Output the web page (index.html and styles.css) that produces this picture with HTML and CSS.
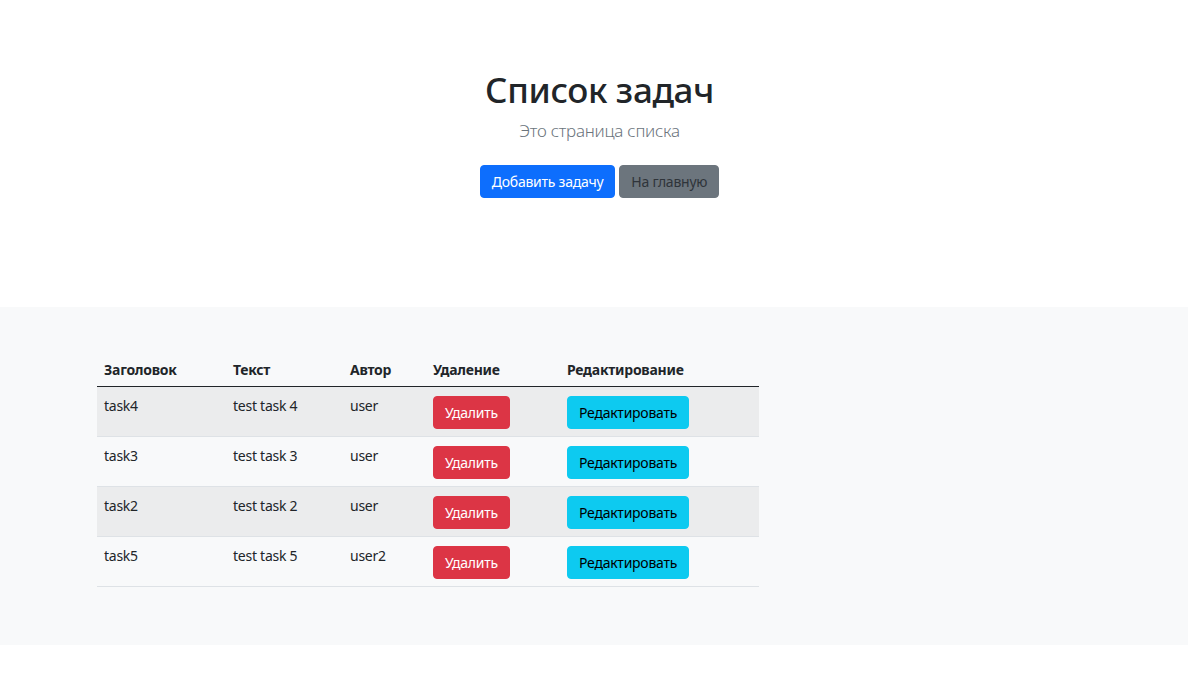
FILE: index.html
```html
<!DOCTYPE html>
<html lang="ru">
<head>
<meta charset="utf-8">
<title>Список задач</title>
<link rel="stylesheet" href="styles.css">
</head>
<body>
<section class="hero">
  <h1 class="hero-title">Список задач</h1>
  <p class="lead">Это страница списка</p>
  <div class="hero-actions">
    <a class="btn btn-primary">Добавить задачу</a>
    <a class="btn btn-secondary">На главную</a>
  </div>
</section>
<div class="album">
  <table class="table">
    <thead>
      <tr>
        <th class="c1">Заголовок</th>
        <th class="c2">Текст</th>
        <th class="c3">Автор</th>
        <th class="c4">Удаление</th>
        <th class="c5">Редактирование</th>
      </tr>
    </thead>
    <tbody>
      <tr class="odd">
        <td>task4</td><td>test task 4</td><td>user</td>
        <td class="act"><a class="btn btn-danger">Удалить</a></td>
        <td class="act"><a class="btn btn-info">Редактировать</a></td>
      </tr>
      <tr>
        <td>task3</td><td>test task 3</td><td>user</td>
        <td class="act"><a class="btn btn-danger">Удалить</a></td>
        <td class="act"><a class="btn btn-info">Редактировать</a></td>
      </tr>
      <tr class="odd">
        <td>task2</td><td>test task 2</td><td>user</td>
        <td class="act"><a class="btn btn-danger">Удалить</a></td>
        <td class="act"><a class="btn btn-info">Редактировать</a></td>
      </tr>
      <tr>
        <td>task5</td><td>test task 5</td><td>user2</td>
        <td class="act"><a class="btn btn-danger">Удалить</a></td>
        <td class="act"><a class="btn btn-info">Редактировать</a></td>
      </tr>
    </tbody>
  </table>
</div>
</body>
</html>
```
FILE: styles.css
```css
* { box-sizing: border-box; }
html, body { margin: 0; padding: 0; background: #fff; }
body {
  font-family: "Noto Sans", "Open Sans", sans-serif;
  font-size: 14px;
  line-height: 21px;
  letter-spacing: -0.25px;
  color: #212529;
}
.hero {
  text-align: center;
  padding: 69px 0 102px 11px;
}
.hero-title {
  margin: 0 0 7px;
  font-size: 35px;
  line-height: 42px;
  font-weight: 500;
  letter-spacing: -0.35px;
}
.lead {
  margin: 0 0 21px;
  font-size: 17px;
  line-height: 26px;
  font-weight: 300;
  color: #6c757d;
}
.hero-actions {
  margin: 0 0 7px;
  display: flex;
  justify-content: center;
  gap: 4px;
}
.btn {
  display: inline-block;
  padding: 5px 11px;
  font-size: 14px;
  line-height: 21px;
  border: 1px solid transparent;
  border-radius: 4px;
  text-decoration: none;
  cursor: pointer;
  white-space: nowrap;
}
.btn-primary { background: #0d6efd; border-color: #0d6efd; color: #fff; }
.btn-secondary { background: #6c757d; border-color: #6c757d; color: #2f343a; }
.btn-danger { background: #dc3545; border-color: #dc3545; color: #fff; }
.btn-info { background: #0dcaf0; border-color: #0dcaf0; color: #000; }
.album {
  background: #f8f9fa;
  padding: 45px 0 58px 97px;
}
.table {
  width: 662px;
  border-collapse: collapse;
}
.table th, .table td {
  text-align: left;
  vertical-align: top;
  padding: 7px 7px;
}
.table th { font-weight: 700; padding-bottom: 6px; }
.table thead tr { border-bottom: 1px solid #212529; }
.table tbody tr { border-bottom: 1px solid #dee2e6; }
.table tbody td { padding-top: 8px; padding-bottom: 8px; }
.table tbody td.act { padding-top: 9px; padding-bottom: 7px; }
.table tbody tr.odd { background: #ebeced; }
.c1 { width: 129px; }
.c2 { width: 117px; }
.c3 { width: 83px; }
.c4 { width: 134px; }
.c5 { width: 199px; }
```
